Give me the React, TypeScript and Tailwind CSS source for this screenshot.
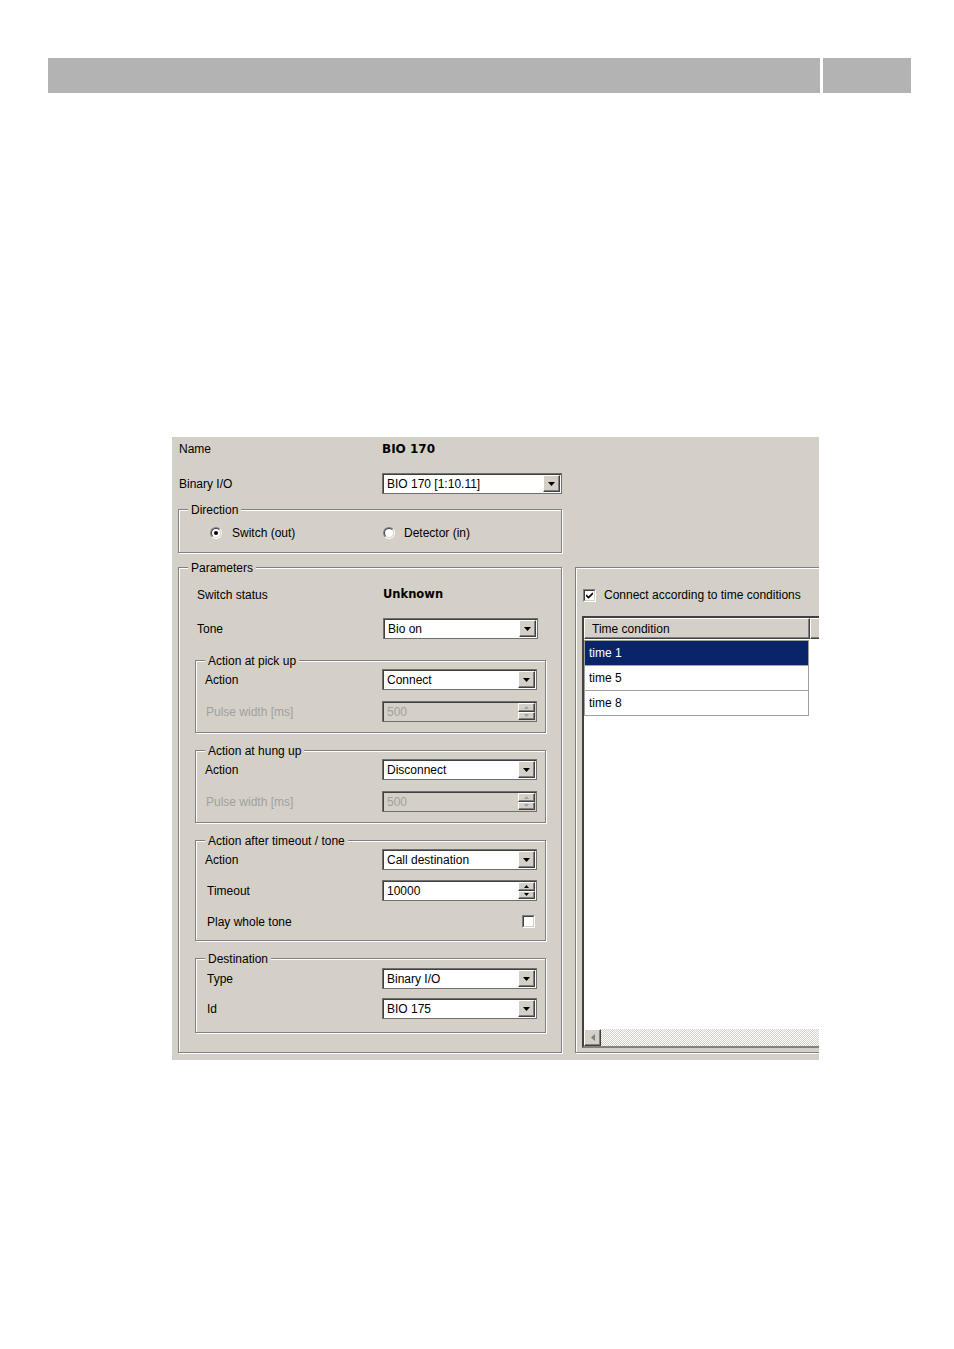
import React from 'react'

const FACE = 'bg-[#d4d0c8]'

function DownArrow({ color = '#000' }: { color?: string }) {
  return (
    <svg width="7" height="4" viewBox="0 0 7 4">
      <polygon points="0,0 7,0 3.5,4" fill={color} />
    </svg>
  )
}

function RaisedButton({ children, className = '' }: { children?: React.ReactNode; className?: string }) {
  return (
    <div
      className={`${FACE} border border-t-white border-l-white border-r-[#404040] border-b-[#404040] shadow-[inset_-1px_-1px_0_#808080] flex items-center justify-center ${className}`}
    >
      {children}
    </div>
  )
}

function Select({ value }: { value: string }) {
  return (
    <div className="w-[155px] h-[21px] flex border border-[#707070] shadow-[inset_1px_1px_0_#404040] bg-white p-[1px]">
      <div className="flex-1 pl-[3px] leading-[18px] text-black">{value}</div>
      <RaisedButton className="w-[17px] h-full">
        <DownArrow />
      </RaisedButton>
    </div>
  )
}

function Spinner({ value, disabled }: { value: string; disabled?: boolean }) {
  const arrow = disabled ? '#a0a0a0' : '#000'
  return (
    <div
      className={`w-[155px] h-[21px] flex border border-[#707070] shadow-[inset_1px_1px_0_#404040] p-[1px] ${disabled ? FACE : 'bg-white'}`}
    >
      <div className={`flex-1 pl-[3px] leading-[18px] ${disabled ? 'text-[#a0a0a0]' : 'text-black'}`}>{value}</div>
      <div className="w-[17px] h-full flex flex-col">
        <RaisedButton className="flex-1">
          <svg width="5" height="3" viewBox="0 0 5 3">
            <polygon points="0,3 5,3 2.5,0" fill={arrow} />
          </svg>
        </RaisedButton>
        <RaisedButton className="flex-1">
          <svg width="5" height="3" viewBox="0 0 5 3">
            <polygon points="0,0 5,0 2.5,3" fill={arrow} />
          </svg>
        </RaisedButton>
      </div>
    </div>
  )
}

function Radio({ checked }: { checked?: boolean }) {
  return (
    <div className="w-[12px] h-[12px] rounded-full border border-t-[#808080] border-l-[#808080] border-r-white border-b-white">
      <div className="w-full h-full rounded-full bg-white border border-t-[#404040] border-l-[#404040] border-r-[#d4d0c8] border-b-[#d4d0c8] flex items-center justify-center">
        {checked && <div className="w-[4px] h-[4px] rounded-full bg-black" />}
      </div>
    </div>
  )
}

function Checkbox({ checked }: { checked?: boolean }) {
  return (
    <div className="w-[13px] h-[13px] border border-t-[#808080] border-l-[#808080] border-r-white border-b-white">
      <div className="w-full h-full bg-white border border-t-[#404040] border-l-[#404040] border-r-[#d4d0c8] border-b-[#d4d0c8] flex items-center justify-center">
        {checked && (
          <svg width="7" height="7" viewBox="0 0 7 7">
            <path d="M0 3 L2.5 5.5 L7 1" stroke="#000" strokeWidth="1.6" fill="none" />
          </svg>
        )}
      </div>
    </div>
  )
}

function Group({ legend, className = '', children }: { legend?: string; className?: string; children?: React.ReactNode }) {
  return (
    <div className={`relative border border-[#808080] shadow-[inset_1px_1px_0_#fff,1px_1px_0_#fff] ${className}`}>
      {legend && (
        <span className={`absolute -top-[7px] left-[9px] px-[3px] leading-[14px] ${FACE}`}>{legend}</span>
      )}
      {children}
    </div>
  )
}

function Row({ label, labelW, children, className = '', dim }: { label: string; labelW: string; children: React.ReactNode; className?: string; dim?: boolean }) {
  return (
    <div className={`flex items-center h-[21px] ${className}`}>
      <div className={`${labelW} ${dim ? 'text-[#a0a0a0]' : 'text-black'}`}>{label}</div>
      {children}
    </div>
  )
}

const timeRows = ['time 1', 'time 5', 'time 8']

export default function App() {
  return (
    <div className="w-[954px] h-[1349px] bg-white font-['Liberation_Sans',Arial,sans-serif] text-[12px] text-black">
      {/* page header bar */}
      <div className="pt-[58px] pl-[48px] flex gap-[3px]">
        <div className="w-[772px] h-[35px] bg-[#b3b3b3]" />
        <div className="w-[88px] h-[35px] bg-[#b3b3b3]" />
      </div>

      {/* dialog screenshot */}
      <div className={`mt-[344px] ml-[172px] w-[647px] h-[623px] overflow-hidden flex ${FACE}`}>
        {/* left column */}
        <div className="ml-[6px] w-[384px] shrink-0 pt-[3px]">
          <div className="flex items-center h-[18px]">
            <div className="w-[204px] pl-[1px]">Name</div>
            <div className="font-['DejaVu_Sans',sans-serif] font-bold text-[12px]">BIO 170</div>
          </div>
          <Row label="Binary I/O" labelW="w-[204px] pl-[1px]" className="mt-[15px]">
            <div className="w-[180px] h-[21px] flex border border-[#707070] shadow-[inset_1px_1px_0_#404040] bg-white p-[1px]">
              <div className="flex-1 pl-[3px] leading-[18px]">BIO 170 [1:10.11]</div>
              <RaisedButton className="w-[17px] h-full">
                <DownArrow />
              </RaisedButton>
            </div>
          </Row>

          <Group legend="Direction" className="mt-[15px] h-[44px] pt-[16px] pl-[31px]">
            <div className="flex items-center h-[14px]">
              <div className="w-[173px] flex items-center gap-[10px]">
                <Radio checked />
                <span>Switch (out)</span>
              </div>
              <div className="flex items-center gap-[9px]">
                <Radio />
                <span>Detector (in)</span>
              </div>
            </div>
          </Group>

          <Group legend="Parameters" className="mt-[14px] h-[486px] pt-[18px]">
            <div className="flex items-center h-[18px] pl-[18px]">
              <div className="w-[186px]">Switch status</div>
              <div className="font-['DejaVu_Sans',sans-serif] font-bold text-[11.5px]">Unknown</div>
            </div>
            <Row label="Tone" labelW="w-[186px]" className="mt-[14px] pl-[18px]">
              <Select value="Bio on" />
            </Row>

            <Group legend="Action at pick up" className="mt-[21px] ml-[16px] w-[351px] h-[73px] pt-[8px]">
              <Row label="Action" labelW="w-[186px] pl-[9px]">
                <Select value="Connect" />
              </Row>
              <Row label="Pulse width [ms]" labelW="w-[186px] pl-[10px]" className="mt-[11px]" dim>
                <Spinner value="500" disabled />
              </Row>
            </Group>

            <Group legend="Action at hung up" className="mt-[17px] ml-[16px] w-[351px] h-[73px] pt-[8px]">
              <Row label="Action" labelW="w-[186px] pl-[9px]">
                <Select value="Disconnect" />
              </Row>
              <Row label="Pulse width [ms]" labelW="w-[186px] pl-[10px]" className="mt-[11px]" dim>
                <Spinner value="500" disabled />
              </Row>
            </Group>

            <Group legend="Action after timeout / tone" className="mt-[17px] ml-[16px] w-[351px] h-[101px] pt-[8px]">
              <Row label="Action" labelW="w-[186px] pl-[9px]">
                <Select value="Call destination" />
              </Row>
              <Row label="Timeout" labelW="w-[186px] pl-[11px]" className="mt-[10px]">
                <Spinner value="10000" />
              </Row>
              <Row label="Play whole tone" labelW="w-[186px] pl-[11px]" className="mt-[10px]">
                <div className="w-[155px] flex justify-end pr-[2px]">
                  <Checkbox />
                </div>
              </Row>
            </Group>

            <Group legend="Destination" className="mt-[17px] ml-[16px] w-[351px] h-[75px] pt-[9px]">
              <Row label="Type" labelW="w-[186px] pl-[11px]">
                <Select value="Binary I/O" />
              </Row>
              <Row label="Id" labelW="w-[186px] pl-[11px]" className="mt-[9px]">
                <Select value="BIO 175" />
              </Row>
            </Group>
          </Group>
        </div>

        {/* right column */}
        <div className="ml-[13px] w-[260px] shrink-0 mt-[130px]">
          <Group className="h-[486px] pt-[20px] pl-[6px]">
            <div className="flex items-center h-[14px] gap-[8px] pl-[1px]">
              <Checkbox checked />
              <span>Connect according to time conditions</span>
            </div>

            <div className="mt-[14px] h-[432px] flex flex-col border-2 border-t-[#404040] border-l-[#404040] border-b-[#808080] border-r-[#808080] bg-white">
              <div className="flex h-[21px] shrink-0">
                <RaisedButton className="w-[226px] h-full !justify-start pl-[7px]">
                  <span>Time condition</span>
                </RaisedButton>
                <RaisedButton className="flex-1 h-full" />
              </div>
              <div className="flex-1 pt-[1px]">
                <div className="w-[225px] border border-[#a0a0a0]">
                  {timeRows.map((t, i) => (
                    <div
                      key={t}
                      className={`flex items-center pl-[4px] ${i > 0 ? 'border-t border-[#a0a0a0] h-[25px]' : 'h-[24px]'} ${i === 0 ? 'bg-[#0a246a] text-white' : 'text-black'}`}
                    >
                      {t}
                    </div>
                  ))}
                </div>
              </div>
              <div className="h-[17px] shrink-0 flex">
                <RaisedButton className="w-[17px] h-full">
                  <svg width="4" height="7" viewBox="0 0 4 7">
                    <polygon points="4,0 4,7 0,3.5" fill="#808080" />
                  </svg>
                </RaisedButton>
                <div className="flex-1 h-full bg-[repeating-conic-gradient(#d4d0c8_0_25%,#ffffff_0_50%)] bg-size-[2px_2px]" />
              </div>
            </div>
          </Group>
        </div>
      </div>
    </div>
  )
}
